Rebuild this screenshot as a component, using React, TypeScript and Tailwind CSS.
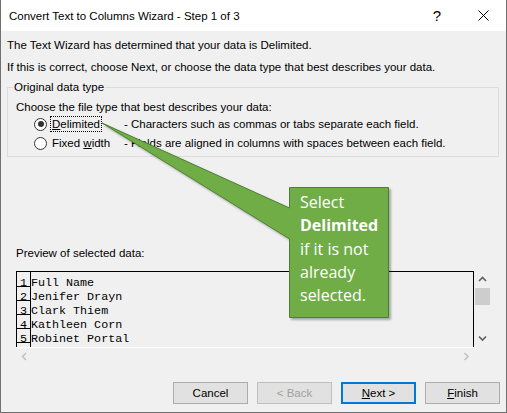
import React from "react";

const rows = ["Full Name", "Jenifer Drayn", "Clark Thiem", "Kathleen Corn", "Robinet Portal"];

type Dir = "up" | "down" | "left" | "right";

function Chevron({ dir, className }: { dir: Dir; className: string }) {
  const paths: Record<Dir, string> = {
    up: "M1 5 L4.5 1.5 L8 5",
    down: "M1 1.5 L4.5 5 L8 1.5",
    left: "M5 1 L1.5 4.5 L5 8",
    right: "M1.5 1 L5 4.5 L1.5 8",
  };
  const vertical = dir === "up" || dir === "down";
  return (
    <svg
      width={vertical ? 9 : 7}
      height={vertical ? 7 : 9}
      viewBox={vertical ? "0 0 9 7" : "0 0 7 9"}
      className={className}
    >
      <path d={paths[dir]} fill="none" stroke="currentColor" strokeWidth="1.6" />
    </svg>
  );
}

function Radio({ checked }: { checked?: boolean }) {
  return (
    <span className="ml-[18px] flex h-[13px] w-[13px] shrink-0 items-center justify-center rounded-full border border-[#333333] bg-white">
      {checked && <span className="h-[6px] w-[6px] rounded-full bg-[#333333]" />}
    </span>
  );
}

function Button({
  children,
  primary,
  disabled,
}: {
  children: React.ReactNode;
  primary?: boolean;
  disabled?: boolean;
}) {
  const border = primary
    ? "border-2 border-[#0078d7]"
    : disabled
    ? "border border-[#bfbfbf]"
    : "border border-[#adadad]";
  return (
    <div
      className={`flex h-[22px] w-[75px] items-center justify-center bg-[#e1e1e1] ${border} ${
        disabled ? "text-[#a0a0a0]" : "text-black"
      }`}
    >
      {children}
    </div>
  );
}

export default function App() {
  return (
    <div className="relative h-[413px] w-[507px] overflow-hidden border-x border-b border-[#707070] bg-[#f0f0f0] font-['Liberation_Sans',Arial,sans-serif] text-[11.5px] leading-[16px] text-black">
      {/* title bar */}
      <div className="flex h-[31px] items-center bg-white">
        <div className="flex-1 pl-[8px] text-[11.5px]">Convert Text to Columns Wizard - Step 1 of 3</div>
        <div className="flex h-full w-[46px] items-center justify-center text-[15px] font-light">?</div>
        <div className="flex h-full w-[46px] items-center justify-center">
          <svg width="11" height="11" viewBox="0 0 11 11">
            <path d="M0.5 0.5 L10.5 10.5 M10.5 0.5 L0.5 10.5" stroke="#000" strokeWidth="1" fill="none" />
          </svg>
        </div>
      </div>

      {/* dialog body */}
      <div className="pl-[6px]">
        <p className="mt-[6px]">The Text Wizard has determined that your data is Delimited.</p>
        <p className="mt-[6px]">If this is correct, choose Next, or choose the data type that best describes your data.</p>

        <fieldset className="mt-[4px] w-[492px] border border-[#dcdcdc] p-0">
          <legend className="ml-[5px] px-[1px] leading-[16px]">Original data type</legend>
          <div className="pb-[5px] pl-[8px]">
            <div className="mt-[4px]">Choose the file type that best describes your data:</div>
            <div className="mt-[1px] flex h-[16px] items-center">
              <Radio checked />
              <span className="ml-[3px] w-[74px] shrink-0">
                <span className="inline-block border border-dotted border-black px-[1px] leading-[14px]">
                  <u>D</u>elimited
                </span>
              </span>
              <span>- Characters such as commas or tabs separate each field.</span>
            </div>
            <div className="mt-[3px] flex h-[16px] items-center">
              <Radio />
              <span className="ml-[3px] w-[74px] shrink-0 pl-[2px]">
                Fixed <u>w</u>idth
              </span>
              <span>- Fields are aligned in columns with spaces between each field.</span>
            </div>
          </div>
        </fieldset>

        <div className="ml-[9px] mt-[88px]">Preview of selected data:</div>

        {/* preview grid with scroll bars */}
        <div className="ml-[9px] mt-[10px] flex h-[93px] w-[475px]">
          <div className="flex w-[458px] flex-col">
            <div className="flex h-[76px] overflow-hidden border-x border-t border-black font-['Liberation_Mono','Courier_New',monospace] text-[11.7px]">
              <div className="h-full w-[14px] shrink-0 border-r border-black pt-[1px]">
                {rows.map((_, i) => (
                  <div key={i} className="h-[14px] border-b border-black text-center leading-[20px]">
                    {i + 1}
                  </div>
                ))}
              </div>
              <div className="flex-1 pt-[1px]">
                {rows.map((r) => (
                  <div key={r} className="h-[14px] whitespace-pre leading-[20px]">
                    {r}
                  </div>
                ))}
              </div>
            </div>
            <div className="flex h-[17px] items-center justify-between border-t border-white">
              <div className="flex w-[16px] justify-center">
                <Chevron dir="left" className="text-[#c2c2c2]" />
              </div>
              <div className="flex w-[16px] justify-center">
                <Chevron dir="right" className="text-[#c2c2c2]" />
              </div>
            </div>
          </div>
          <div className="flex h-[76px] w-[17px] flex-col justify-between">
            <div className="flex h-[17px] items-center justify-center">
              <Chevron dir="up" className="text-[#606060]" />
            </div>
            <div className="mx-[1px] mb-auto h-[17px] w-[15px] bg-[#cdcdcd]" />
            <div className="flex h-[17px] items-center justify-center">
              <Chevron dir="down" className="text-[#606060]" />
            </div>
          </div>
        </div>

        {/* wizard buttons */}
        <div className="mt-[18px] flex justify-end gap-[9px] pr-[6px]">
          <Button>Cancel</Button>
          <Button disabled>&lt; Back</Button>
          <Button primary>
            <span>
              <u>N</u>ext &gt;
            </span>
          </Button>
          <Button>
            <span>
              <u>F</u>inish
            </span>
          </Button>
        </div>
      </div>

      {/* annotation callout */}
      <svg
        className="pointer-events-none absolute left-[-1px] top-0"
        width="507"
        height="413"
        viewBox="0 0 507 413"
      >
        <defs>
          <filter id="calloutShadow" x="-10%" y="-10%" width="130%" height="130%">
            <feDropShadow dx="2" dy="2" stdDeviation="1.2" floodColor="#000" floodOpacity="0.3" />
          </filter>
        </defs>
        <path
          d="M289.5 187.5 H388.5 V317.5 H289.5 V239 L102 123 L289.5 208 Z"
          fill="#70ad47"
          stroke="#507e32"
          strokeWidth="1"
          filter="url(#calloutShadow)"
        />
      </svg>
      <div className="absolute left-[288px] top-[187px] h-[131px] w-[100px] pl-[11px] pt-[4px] font-['Open_Sans',sans-serif] text-[16px] leading-[23.3px] text-white">
        <div>Select</div>
        <div className="font-bold">Delimited</div>
        <div>if it is not</div>
        <div>already</div>
        <div>selected.</div>
      </div>
    </div>
  );
}
